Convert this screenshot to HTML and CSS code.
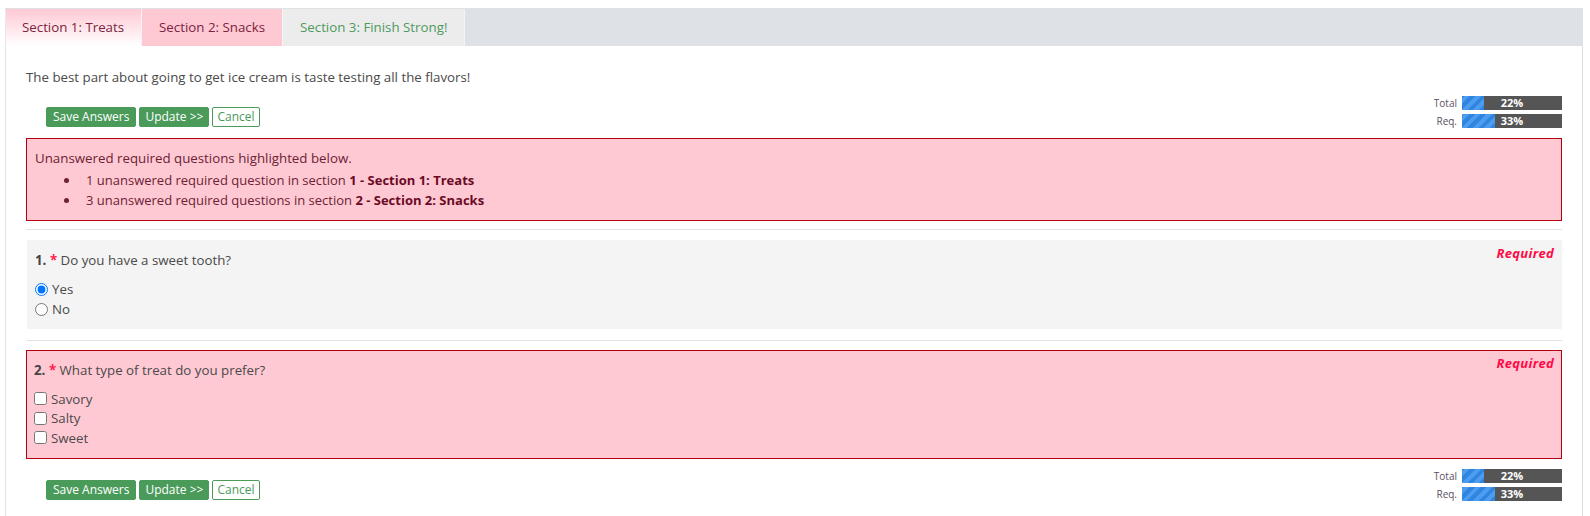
FILE: index.html
```html
<!DOCTYPE html>
<html>
<head>
<meta charset="utf-8">
<link rel="stylesheet" href="styles.css">
</head>
<body>
<div class="page">
  <div class="tabs">
    <div class="tab tab-active">Section 1: Treats</div>
    <div class="tab tab-pink">Section 2: Snacks</div>
    <div class="tab tab-done">Section 3: Finish Strong!</div>
  </div>
  <div class="content">
    <p class="intro">The best part about going to get ice cream is taste testing all the flavors!</p>
    <div class="actions">
      <div class="buttons">
        <button class="btn btn-green">Save Answers</button>
        <button class="btn btn-green btn-update">Update &gt;&gt;</button>
        <button class="btn btn-outline">Cancel</button>
      </div>
      <div class="progress">
        <div class="prow"><span class="plabel">Total</span><div class="bar"><div class="fill" style="width:22%"></div><span class="ptext">22%</span></div></div>
        <div class="prow"><span class="plabel">Req.</span><div class="bar"><div class="fill" style="width:33%"></div><span class="ptext">33%</span></div></div>
      </div>
    </div>
    <div class="alert">
      <div>Unanswered required questions highlighted below.</div>
      <ul>
        <li>1 unanswered required question in section <b>1 - Section 1: Treats</b></li>
        <li>3 unanswered required questions in section <b>2 - Section 2: Snacks</b></li>
      </ul>
    </div>
    <div class="sep"></div>
    <div class="question">
      <div class="qhead">
        <div class="qtext"><b>1.</b> <span class="star">*</span> Do you have a sweet tooth?</div>
        <div class="req">Required</div>
      </div>
      <div class="options">
        <label class="opt"><input type="radio" name="q1" checked>Yes</label>
        <label class="opt"><input type="radio" name="q1">No</label>
      </div>
    </div>
    <div class="sep sep-second"></div>
    <div class="question q-error">
      <div class="qhead">
        <div class="qtext"><b>2.</b> <span class="star">*</span> What type of treat do you prefer?</div>
        <div class="req">Required</div>
      </div>
      <div class="options">
        <label class="opt"><input type="checkbox">Savory</label>
        <label class="opt"><input type="checkbox">Salty</label>
        <label class="opt"><input type="checkbox">Sweet</label>
      </div>
    </div>
    <div class="actions actions-bottom">
      <div class="buttons">
        <button class="btn btn-green">Save Answers</button>
        <button class="btn btn-green btn-update">Update &gt;&gt;</button>
        <button class="btn btn-outline">Cancel</button>
      </div>
      <div class="progress">
        <div class="prow"><span class="plabel">Total</span><div class="bar"><div class="fill" style="width:22%"></div><span class="ptext">22%</span></div></div>
        <div class="prow"><span class="plabel">Req.</span><div class="bar"><div class="fill" style="width:33%"></div><span class="ptext">33%</span></div></div>
      </div>
    </div>
  </div>
</div>
</body>
</html>
```
FILE: styles.css
```css
html, body {
  margin: 0;
  padding: 0;
  background: #ffffff;
}
body {
  font-family: "Open Sans", "Liberation Sans", sans-serif;
  font-size: 13.3px;
  color: #4a4a4a;
}
.page {
  margin: 8px 7px 0 5px;
  min-height: 508px;
  box-sizing: border-box;
}
.tabs {
  display: flex;
  background: #dee1e5;
  height: 38px;
  border-top: 1px solid #dee1e5;
  box-sizing: border-box;
}
.tab {
  padding: 0 17px;
  line-height: 37px;
  height: 37px;
  font-size: 13.3px;
  border-right: 1px solid #f4f4f6;
  white-space: nowrap;
}
.tab-active {
  background: linear-gradient(#ffc9d4, #ffffff);
  color: #7b2340;
  border-left: 1px solid #e8e8ec;
  padding-left: 16px;
}
.tab-pink {
  background: #ffc9d4;
  color: #7b2340;
}
.tab-done {
  background: #ececec;
  color: #4c9a5e;
}
.content {
  border-left: 1px solid #e2e2e6;
  border-right: 1px solid #dcdce4;
  padding: 1px 20px 16px 20px;
  min-height: 450px;
}
.intro {
  margin: 20px 0 0 0;
  line-height: 20px;
}
.actions {
  display: flex;
  justify-content: space-between;
  align-items: flex-end;
  margin-top: 9px;
}
.actions-bottom {
  margin-top: 10px;
}
.buttons {
  display: flex;
  gap: 3px;
  padding-left: 20px;
  padding-bottom: 1px;
}
.btn {
  font-family: "Open Sans", "Liberation Sans", sans-serif;
  font-size: 12px;
  height: 20px;
  line-height: 18px;
  padding: 0 6px;
  border-radius: 2px;
  border: 1px solid #4a9a5a;
  cursor: pointer;
}
.btn-green {
  background: #4a9a5a;
  color: #ffffff;
}
.btn-update {
  padding: 0 5px;
}
.btn-outline {
  background: #ffffff;
  color: #4a9a5a;
  padding: 0 4px;
}
.progress {
  display: flex;
  flex-direction: column;
  gap: 4px;
}
.prow {
  display: flex;
  align-items: center;
  gap: 5px;
}
.plabel {
  font-size: 10px;
  color: #5a5060;
  width: 30px;
  text-align: right;
}
.bar {
  position: relative;
  width: 100px;
  height: 14px;
  background: #555555;
  overflow: hidden;
}
.fill {
  height: 100%;
  background: repeating-linear-gradient(-45deg, #2f86e0 0, #2f86e0 4px, #4d9cf0 4px, #4d9cf0 8px);
}
.ptext {
  position: absolute;
  left: 0;
  right: 0;
  top: 0;
  line-height: 14px;
  text-align: center;
  color: #ffffff;
  font-weight: bold;
  font-size: 11px;
}
.alert {
  margin-top: 10px;
  background: #ffc9d4;
  border: 1px solid #b3000f;
  padding: 9px 8px 10px 8px;
  line-height: 20px;
  color: #6b2233;
}
.alert ul {
  margin: 2px 0 0 0;
  padding-left: 51px;
  font-size: 13px;
  list-style: none;
}
.alert li::before {
  content: "";
  display: inline-block;
  width: 5px;
  height: 5px;
  border-radius: 50%;
  background: #6b2233;
  margin-left: -22px;
  margin-right: 17px;
  vertical-align: middle;
  position: relative;
  top: -1px;
}
.alert b {
  color: #6a0a24;
}
.sep {
  height: 1px;
  background: #e3e3e3;
  margin: 8px 0 10px 0;
}
.sep-second {
  margin: 11px 0 9px 0;
}
.question {
  background: #f4f4f4;
  padding: 10px 8px 10px 8px;
  line-height: 20px;
  margin-left: 1px;
}
.q-error {
  background: #ffc9d4;
  border: 1px solid #b3000f;
  margin-left: 0;
  padding: 9px 7px 10px 7px;
}
.qhead {
  display: flex;
  justify-content: space-between;
  align-items: flex-start;
}
.qtext b {
  color: #444;
}
.star {
  color: #ff1f4f;
  font-weight: bold;
}
.req {
  color: #ff0a45;
  font-weight: bold;
  font-style: italic;
  font-size: 13px;
  margin-top: -7px;
  letter-spacing: 0.3px;
}
.options {
  margin-top: 9px;
  display: flex;
  flex-direction: column;
}
.opt {
  display: flex;
  align-items: center;
  height: 20px;
}
.opt input {
  margin: 0 4px 0 0;
  width: 13px;
  height: 13px;
}
.q-error .opt {
  height: 19.5px;
}
```
